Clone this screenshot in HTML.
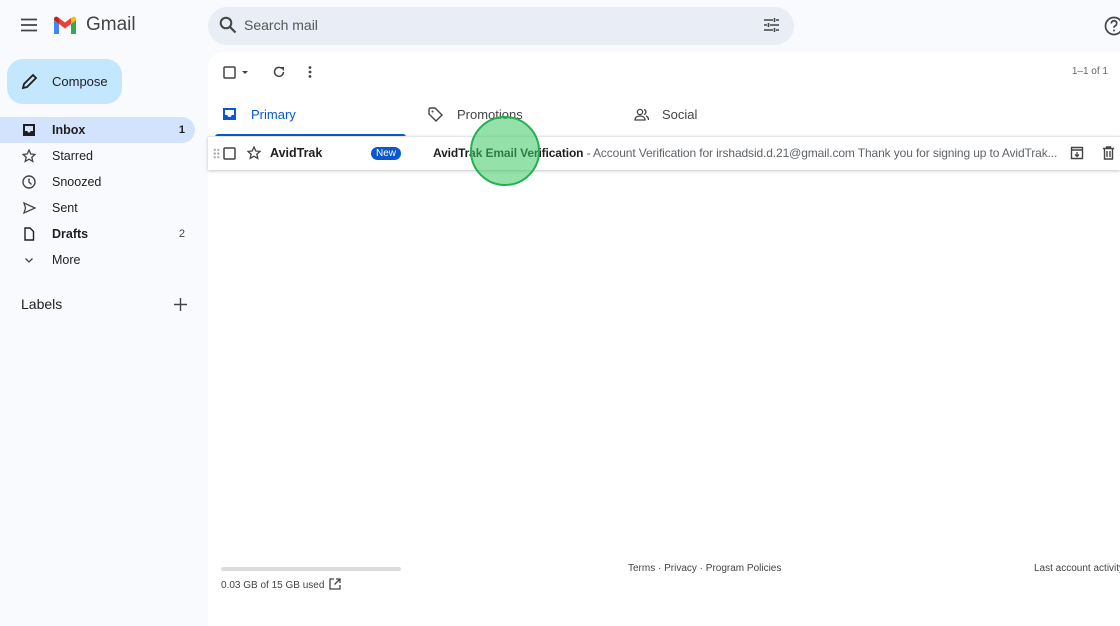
<!DOCTYPE html>
<html><head><meta charset="utf-8"><style>
*{box-sizing:border-box;margin:0;padding:0}
body{width:1120px;height:626px;overflow:hidden;background:#f8fafd;font-family:"Liberation Sans",Arial,sans-serif;color:#1f1f1f;position:relative}
.abs{position:absolute}
.nav{position:absolute;left:0;width:195px;height:26px;font-size:12.5px;line-height:26px}
.nav span.t{position:absolute;left:52px}
.nav span.c{position:absolute;right:10px;font-size:11px;color:#444}
.nav svg{position:absolute;left:22px;top:6px}
.main{position:absolute;left:208px;top:52px;width:912px;height:574px;background:#fff;border-radius:16px 0 0 0}
.tab{position:absolute;top:45px;font-size:13px;color:#444}
</style></head><body>
<svg class="abs" style="left:20px;top:18px" width="18" height="14" viewBox="0 0 18 14"><path d="M1 1.5h16M1 7h16M1 12.5h16" stroke="#444" stroke-width="1.8"/></svg>
<svg class="abs" style="left:52px;top:16px" width="26" height="20" viewBox="0 0 26 20"><path d="M2 4v14h5V8z" fill="#4285f4"/><path d="M19 8v10h5V4z" fill="#34a853"/><path d="M19 2v6l5-4V3c0-2-2-3-3.5-2z" fill="#fbbc04"/><path d="M7 8l6 4.5L19 8V2l-6 4.5L7 2z" fill="#ea4335"/><path d="M2 3v1l5 4V2L5.5 1C4 0 2 1 2 3z" fill="#c5221f"/></svg>
<div class="abs" style="left:86px;top:14px;font-size:19px;color:#444">Gmail</div>
<div class="abs" style="left:208px;top:7px;width:586px;height:38px;background:#e9eef6;border-radius:19px"></div>
<svg class="abs" style="left:219px;top:16px" width="18" height="18" viewBox="0 0 18 18"><circle cx="7" cy="7" r="5.3" fill="none" stroke="#444" stroke-width="2"/><path d="M11 11l5.5 5.5" stroke="#444" stroke-width="2.2"/></svg>
<div class="abs" style="left:244px;top:17px;font-size:14px;color:#555">Search mail</div>
<svg class="abs" style="left:763px;top:17px" width="17" height="16" viewBox="0 0 17 16"><path d="M1 3h9M13 3h3M1 8h3M7 8h9M1 13h9M13 13h3M11.5 1v4M5.5 6v4M11.5 11v4" stroke="#444" stroke-width="1.6"/></svg>
<svg class="abs" style="left:1103px;top:15px" width="22" height="22" viewBox="0 0 22 22"><circle cx="11" cy="11" r="8.5" fill="none" stroke="#444" stroke-width="1.7"/><path d="M8.3 8.5a2.7 2.7 0 1 1 3.8 2.4c-.8.4-1.1.9-1.1 1.8" fill="none" stroke="#444" stroke-width="1.7"/><circle cx="11" cy="15.5" r="1" fill="#444"/></svg>
<div class="abs" style="left:7px;top:59px;width:115px;height:45px;background:#c2e7ff;border-radius:16px"></div>
<svg class="abs" style="left:21px;top:73px" width="17" height="17" viewBox="0 0 17 17"><path d="M2 15l1-4L12 2l3 3-9 9z" fill="none" stroke="#1f1f1f" stroke-width="1.8"/></svg>
<div class="abs" style="left:52px;top:74px;font-size:13px;color:#1f1f1f">Compose</div>
<div class="nav" style="top:117px;background:#d3e3fd;border-radius:0 13px 13px 0;font-weight:bold"><svg width="14" height="14" viewBox="0 0 14 14"><path d="M1 1h12v12H1z" fill="#1f1f1f"/><path d="M3 3h8v5H8.5a1.5 1.5 0 0 1-3 0H3z" fill="#d3e3fd"/></svg><span class="t">Inbox</span><span class="c" style="color:#1f1f1f">1</span></div>
<div class="nav" style="top:143px"><svg width="14" height="14" viewBox="0 0 14 14"><path d="M7 1l1.8 4 4.2.4-3.2 2.8 1 4.2L7 10.2 3.2 12.4l1-4.2L1 5.4l4.2-.4z" fill="none" stroke="#444" stroke-width="1.3"/></svg><span class="t">Starred</span></div>
<div class="nav" style="top:169px"><svg width="14" height="14" viewBox="0 0 14 14"><circle cx="7" cy="7" r="6" fill="none" stroke="#444" stroke-width="1.4"/><path d="M7 3.5V7l2.5 2.5" fill="none" stroke="#444" stroke-width="1.4"/></svg><span class="t">Snoozed</span></div>
<div class="nav" style="top:195px"><svg width="14" height="14" viewBox="0 0 14 14"><path d="M2 2l11 5-11 5 1.5-5z" fill="none" stroke="#444" stroke-width="1.3"/></svg><span class="t">Sent</span></div>
<div class="nav" style="top:221px;font-weight:bold"><svg width="14" height="14" viewBox="0 0 14 14"><path d="M3 1h5l3.5 3.5V13H3z" fill="none" stroke="#1f1f1f" stroke-width="1.4"/></svg><span class="t">Drafts</span><span class="c" style="font-weight:normal">2</span></div>
<div class="nav" style="top:247px"><svg width="14" height="14" viewBox="0 0 14 14"><path d="M3.5 5.5L7 9l3.5-3.5" fill="none" stroke="#444" stroke-width="1.3"/></svg><span class="t">More</span></div>
<div class="abs" style="left:21px;top:296px;font-size:14px;color:#1f1f1f">Labels</div>
<svg class="abs" style="left:174px;top:298px" width="13" height="13" viewBox="0 0 13 13"><path d="M6.5 0v13M0 6.5h13" stroke="#444" stroke-width="1.4"/></svg>
<div class="main">
<svg class="abs" style="left:15px;top:14px" width="30" height="13" viewBox="0 0 30 13"><rect x="1" y="1" width="11" height="11" fill="none" stroke="#444" stroke-width="1.5" rx="1"/><path d="M19 5h6l-3 3z" fill="#444"/></svg>
<svg class="abs" style="left:64px;top:13px" width="14" height="14" viewBox="0 0 14 14"><path d="M11.5 7A4.5 4.5 0 1 1 10 3.5" fill="none" stroke="#444" stroke-width="1.5"/><path d="M8 2h4v4z" fill="#444"/></svg>
<svg class="abs" style="left:100px;top:13px" width="4" height="14" viewBox="0 0 4 14"><circle cx="2" cy="2.5" r="1.4" fill="#444"/><circle cx="2" cy="7" r="1.4" fill="#444"/><circle cx="2" cy="11.5" r="1.4" fill="#444"/></svg>
<div class="abs" style="right:12px;top:14px;font-size:10px;color:#666">1–1 of 1</div>
<svg class="abs" style="left:15px;top:56px" width="13" height="12" viewBox="0 0 13 12"><path d="M0 0h13v12H0z" fill="#0b57d0"/><path d="M2 2h9v5H8.5a2 2 0 0 1-4 0H2z" fill="#fff"/></svg>
<div class="tab" style="left:43px;top:55px;color:#0b57d0">Primary</div>
<div class="abs" style="left:7px;top:82px;width:191px;height:3px;background:#0b57d0;border-radius:3px 3px 0 0"></div>
<svg class="abs" style="left:220px;top:55px" width="15" height="15" viewBox="0 0 15 15"><path d="M1 2v5l7 7 6-6-7-7H2z" fill="none" stroke="#444" stroke-width="1.4"/><circle cx="4.5" cy="4.5" r="1" fill="#444"/></svg>
<div class="tab" style="left:249px;top:55px">Promotions</div>
<svg class="abs" style="left:426px;top:56px" width="15" height="13" viewBox="0 0 15 13"><circle cx="6" cy="4" r="2.6" fill="none" stroke="#444" stroke-width="1.3"/><path d="M1 12c0-3 2.5-4 5-4s5 1 5 4zM10 1.5a2.6 2.6 0 0 1 0 5M12 8c1.5.5 2.5 1.5 2.5 4" fill="none" stroke="#444" stroke-width="1.3"/></svg>
<div class="tab" style="left:454px;top:55px">Social</div>
<div class="abs" style="left:0;top:84px;width:912px;height:34px;border-top:1px solid #e6e6e6;box-shadow:0 1px 3px rgba(60,64,67,.3);background:#fff"></div>
<div class="abs" style="left:5px;top:96px;width:7px;height:11px;background:radial-gradient(circle,#aaa 1px,transparent 1.3px) 0 0/3.5px 3.7px"></div>
<svg class="abs" style="left:15px;top:95px" width="13" height="13" viewBox="0 0 13 13"><rect x="1" y="1" width="11" height="11" fill="none" stroke="#444" stroke-width="1.5" rx="1"/></svg>
<svg class="abs" style="left:39px;top:94px" width="14" height="14" viewBox="0 0 14 14"><path d="M7 1l1.8 4 4.2.4-3.2 2.8 1 4.2L7 10.2 3.2 12.4l1-4.2L1 5.4l4.2-.4z" fill="none" stroke="#444" stroke-width="1.3"/></svg>
<div class="abs" style="left:62px;top:94px;font-size:12.5px;font-weight:bold">AvidTrak</div>
<div class="abs" style="left:163px;top:95px;width:30px;height:13px;background:#0b57d0;border-radius:7px;color:#fff;font-size:10px;line-height:13px;text-align:center">New</div>
<div class="abs" style="left:225px;top:94px;font-size:12px;letter-spacing:-0.12px;white-space:nowrap;width:625px;overflow:hidden"><b>AvidTrak Email Verification</b><span style="color:#5f6368"> - Account Verification for irshadsid.d.21@gmail.com Thank you for signing up to AvidTrak....</span></div>
<svg class="abs" style="left:862px;top:94px" width="14" height="14" viewBox="0 0 14 14"><path d="M1.5 1.5h11v11h-11zM1.5 4h11" fill="none" stroke="#444" stroke-width="1.4"/><path d="M7 6v4.5M5 8.5l2 2 2-2" fill="none" stroke="#444" stroke-width="1.3"/></svg>
<svg class="abs" style="left:894px;top:94px" width="13" height="14" viewBox="0 0 13 14"><path d="M1 2.5h11M4.5 2.5V1h4v1.5M2.5 2.5V13h8V2.5M5 5v6M8 5v6" fill="none" stroke="#444" stroke-width="1.4"/></svg>
<div class="abs" style="left:13px;top:515px;width:180px;height:4px;background:#dadce0;border-radius:2px"></div>
<div class="abs" style="left:13px;top:528px;font-size:10px;color:#444">0.03 GB of 15 GB used</div>
<svg class="abs" style="left:121px;top:526px" width="12" height="12" viewBox="0 0 12 12"><path d="M5 1H1v10h10V7M7 1h4v4M11 1L5.5 6.5" fill="none" stroke="#444" stroke-width="1.3"/></svg>
<div class="abs" style="left:420px;top:511px;font-size:10px;color:#444">Terms · Privacy · Program Policies</div>
<div class="abs" style="left:826px;top:511px;font-size:10px;color:#444;white-space:nowrap">Last account activity</div>
</div>
<div class="abs" style="left:470px;top:116px;width:70px;height:70px;border-radius:50%;background:rgba(60,200,100,.55);border:2.5px solid #22b050"></div>
</body></html>
